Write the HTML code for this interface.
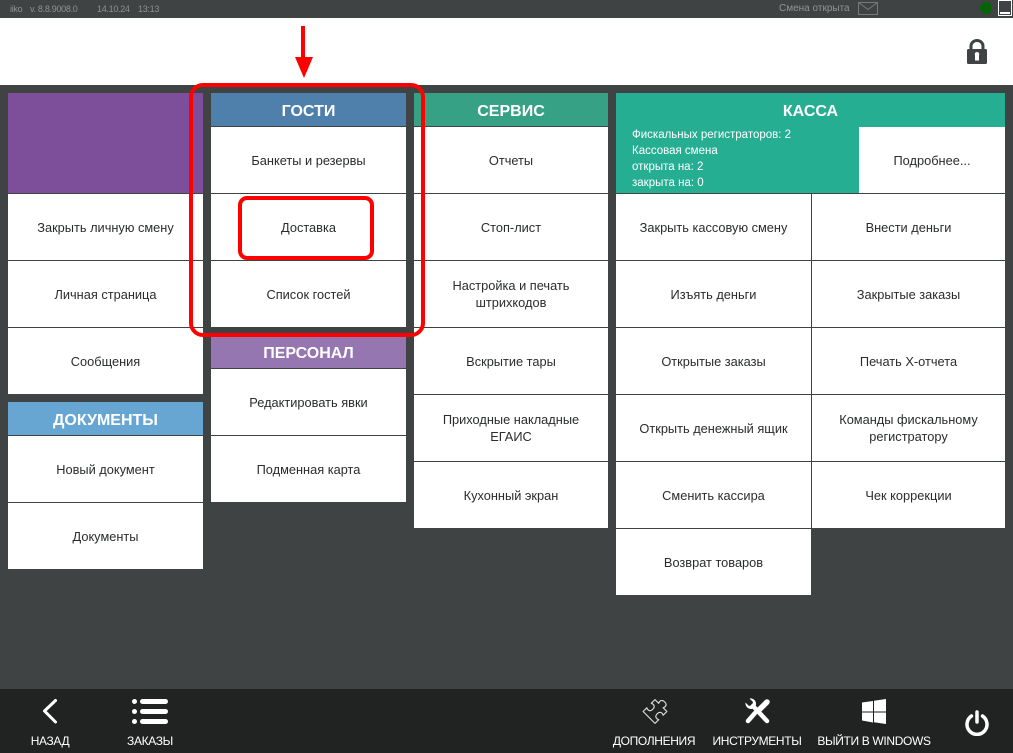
<!DOCTYPE html>
<html lang="ru"><head><meta charset="utf-8">
<style>
html,body{margin:0;padding:0}
body{width:1013px;height:753px;position:relative;overflow:hidden;background:#3f4344;font-family:"Liberation Sans",sans-serif;}
div{position:absolute;box-sizing:border-box}
.b{background:#fff;color:#2a2c2d;font-size:12.8px;line-height:17px;display:flex;align-items:center;justify-content:center;text-align:center;border-top:1px solid #3f4344;height:67px;width:195px}
.h{color:#fff;font-size:16px;font-weight:bold;display:flex;align-items:center;justify-content:center;height:33px;padding-top:5px}
.t{color:#fff;font-size:12px;letter-spacing:-.35px;white-space:nowrap;text-align:center}
.s{font-size:9px;letter-spacing:-.3px;color:#8f9192;white-space:nowrap;top:3px;line-height:12px}
.r{left:811px;width:194px;border-left:1px solid #3f4344}
</style></head><body>
<div style="left:0;top:18px;width:1013px;height:67px;background:#fff"></div>
<div class="s" style="left:10px">iiko</div>
<div class="s" style="left:30px">v. 8.8.9008.0</div>
<div class="s" style="left:97px">14.10.24</div>
<div class="s" style="left:138px">13:13</div>
<div class="s" style="left:779px;top:3px;font-size:10px;letter-spacing:0;color:#929495">Смена открыта</div>
<svg style="position:absolute;left:858px;top:2px" width="20" height="13" viewBox="0 0 20 13"><path d="M.5.5h19v12H.5zM.5.5l9.500 7 9.500-7" fill="none" stroke="#777a7b"/></svg>
<div style="left:980px;top:2px;width:12px;height:12px;border-radius:50%;background:#056405"></div>
<div style="left:998px;top:0;width:14px;height:16px;border:1px solid #fff"></div>
<div style="left:1000px;top:12px;width:10px;height:2px;background:#fff"></div>
<svg style="position:absolute;left:967px;top:39px" width="20" height="25" viewBox="0 0 20 25"><path d="M4 11V7a6 5.500 0 0 1 12 0V11" fill="none" stroke="#3f4344" stroke-width="3"/><path fill-rule="evenodd" d="M1.500 10h17A1.500 1.500 0 0 1 20 11.500v12a1.500 1.500 0 0 1-1.500 1.500h-17A1.500 1.500 0 0 1 0 23.500v-12A1.500 1.500 0 0 1 1.500 10zM10 13a2.200 2.200 0 0 0-2 3.200V21.500h4v-5.300A2.200 2.200 0 0 0 10 13z" fill="#3f4344"/></svg>

<div style="left:8px;top:93px;width:195px;height:100px;background:#7d4f9a"></div>
<div class="b" style="left:8px;top:193px">Закрыть личную смену</div>
<div class="b" style="left:8px;top:260px">Личная страница</div>
<div class="b" style="left:8px;top:327px">Сообщения</div>
<div class="h" style="left:8px;top:402px;width:195px;background:#67a6d3">ДОКУМЕНТЫ</div>
<div class="b" style="left:8px;top:435px">Новый документ</div>
<div class="b" style="left:8px;top:502px">Документы</div>

<div class="h" style="left:211px;top:93px;width:195px;background:#4f7fab">ГОСТИ</div>
<div class="b" style="left:211px;top:126px">Банкеты и резервы</div>
<div class="b" style="left:211px;top:193px">Доставка</div>
<div class="b" style="left:211px;top:260px">Список гостей</div>
<div class="h" style="left:211px;top:335px;width:195px;background:#9576b0">ПЕРСОНАЛ</div>
<div class="b" style="left:211px;top:368px">Редактировать явки</div>
<div class="b" style="left:211px;top:435px">Подменная карта</div>

<div class="h" style="left:414px;top:93px;width:194px;background:#36a185">СЕРВИС</div>
<div class="b" style="left:414px;top:126px;width:194px">Отчеты</div>
<div class="b" style="left:414px;top:193px;width:194px">Стоп-лист</div>
<div class="b" style="left:414px;top:260px;width:194px">Настройка и печать<br>штрихкодов</div>
<div class="b" style="left:414px;top:327px;width:194px">Вскрытие тары</div>
<div class="b" style="left:414px;top:394px;width:194px">Приходные накладные<br>ЕГАИС</div>
<div class="b" style="left:414px;top:461px;width:194px">Кухонный экран</div>

<div class="h" style="left:616px;top:93px;width:389px;height:100px;background:#26ae93;align-items:flex-start;padding-top:10px">КАССА</div>
<div style="left:632px;top:127px;color:#fff;font-size:11.500px;line-height:16px;white-space:nowrap">Фискальных регистраторов: 2<br>Кассовая смена<br>открыта на: 2<br>закрыта на: 0</div>
<div class="b" style="left:859px;top:127px;width:146px;height:66px;border-top:0">Подробнее...</div>
<div class="b" style="left:616px;top:193px">Закрыть кассовую смену</div>
<div class="b r" style="top:193px">Внести деньги</div>
<div class="b" style="left:616px;top:260px">Изъять деньги</div>
<div class="b r" style="top:260px">Закрытые заказы</div>
<div class="b" style="left:616px;top:327px">Открытые заказы</div>
<div class="b r" style="top:327px">Печать Х-отчета</div>
<div class="b" style="left:616px;top:394px">Открыть денежный ящик</div>
<div class="b r" style="top:394px">Команды фискальному<br>регистратору</div>
<div class="b" style="left:616px;top:461px">Сменить кассира</div>
<div class="b r" style="top:461px">Чек коррекции</div>
<div class="b" style="left:616px;top:528px">Возврат товаров</div>

<div style="left:189px;top:83px;width:236px;height:254px;border:4px solid #f00;border-radius:14px"></div>
<div style="left:238px;top:196px;width:136px;height:64px;border:4px solid #f00;border-radius:9px"></div>
<svg style="position:absolute;left:290px;top:20px" width="30" height="62" viewBox="0 0 30 62"><path d="M11 6h4l0 31h8L14 58 5 37h6z" fill="#f00"/></svg>

<div style="left:0;top:689px;width:1013px;height:64px;background:#212222"></div>
<svg style="position:absolute;left:40px;top:697px" width="20" height="28" viewBox="0 0 20 28"><path d="M15.500 3.500L4.500 14l11 11" fill="none" stroke="#fff" stroke-width="3" stroke-linecap="round" stroke-linejoin="round"/></svg>
<div class="t" style="left:20px;width:60px;top:734px">НАЗАД</div>
<svg style="position:absolute;left:130px;top:697px" width="40" height="28" viewBox="0 0 40 28"><g fill="#fff"><circle cx="4.500" cy="4.500" r="2.500"/><circle cx="4.500" cy="14.500" r="2.500"/><circle cx="4.500" cy="24.500" r="2.500"/><rect x="10" y="2" width="28" height="5" rx="2.500"/><rect x="10" y="12" width="28" height="5" rx="2.500"/><rect x="10" y="22" width="28" height="5" rx="2.500"/></g></svg>
<div class="t" style="left:120px;width:60px;top:734px">ЗАКАЗЫ</div>

<svg style="position:absolute;left:642px;top:698px" width="26" height="27" viewBox="0 0 26 27"><path transform="translate(13 13.500) rotate(45) scale(1.050)" d="M-8-8H-3c-1-2-1-5 3-5 4 0 4 3 3 5H8V-3c-2-1-5-1-5 3 0 4 3 4 5 3V8H-8V3c2 1 5 1 5-3 0-4-3-4-5-3Z" fill="none" stroke="#dcdcdc" stroke-width="1.100" stroke-linejoin="round"/></svg>
<div class="t" style="left:604px;width:100px;top:734px">ДОПОЛНЕНИЯ</div>
<svg style="position:absolute;left:744px;top:697px" width="27" height="28" viewBox="0 0 27 28"><g fill="none" stroke="#fff" stroke-linecap="round"><path d="M9 9L23 24" stroke-width="4.500"/><path d="M23 5L16 12" stroke-width="5.500"/><path d="M11 16L4 24" stroke-width="4.500"/></g><path d="M1.500 5.500L5 9l3-1 1-3-3.500-3.500C9 1 12.500 3.500 12 8l-4 4C4 12.500 1 9 1.500 5.500z" fill="#fff"/></svg>
<div class="t" style="left:707px;width:100px;top:734px">ИНСТРУМЕНТЫ</div>
<svg style="position:absolute;left:862px;top:699px" width="24" height="25" viewBox="0 0 24 25"><path d="M0 3.500l11-1.500v10.500H0zM12 1.800L24 0v12.500H12zM0 13.500h11v10L0 21.500zM12 13.500h12V25l-12-1.800z" fill="#fff"/></svg>
<div class="t" style="left:814px;width:120px;top:734px">ВЫЙТИ В WINDOWS</div>
<svg style="position:absolute;left:964px;top:710px" width="26" height="26" viewBox="0 0 26 26"><path d="M7.500 6a10 10 0 1 0 11 0" fill="none" stroke="#fff" stroke-width="3.500" stroke-linecap="round"/><path d="M13 2v10" stroke="#fff" stroke-width="3.500" stroke-linecap="round"/></svg>
</body></html>
